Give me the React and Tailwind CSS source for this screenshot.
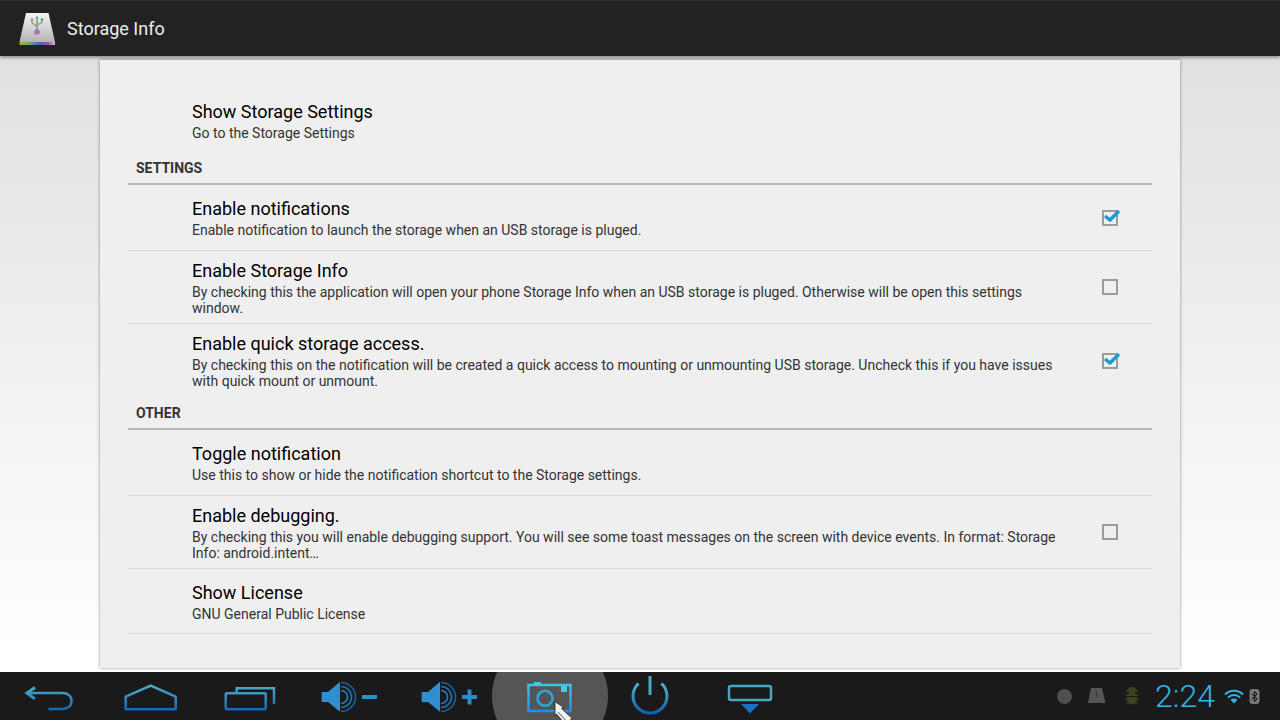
const font = { fontFamily: "Roboto, 'Liberation Sans', sans-serif" };

function Grad() {
  return (
    <svg width="0" height="0" className="absolute">
      <defs>
        <linearGradient id="navGrad" gradientUnits="userSpaceOnUse" x1="0" y1="10" x2="0" y2="40">
          <stop offset="0" stopColor="#55b8c8" />
          <stop offset="1" stopColor="#1162b8" />
        </linearGradient>
        <linearGradient id="camGrad" gradientUnits="userSpaceOnUse" x1="0" y1="10" x2="0" y2="40">
          <stop offset="0" stopColor="#3fcbe0" />
          <stop offset="1" stopColor="#1a8ff2" />
        </linearGradient>
        <linearGradient id="diskGrad" x1="0" y1="0" x2="0" y2="1">
          <stop offset="0" stopColor="#f4f4f4" />
          <stop offset="1" stopColor="#b4b4b4" />
        </linearGradient>
        <linearGradient id="rainbow" x1="0" y1="0" x2="1" y2="0">
          <stop offset="0" stopColor="#b8a050" />
          <stop offset="0.3" stopColor="#60b060" />
          <stop offset="0.55" stopColor="#5060c0" />
          <stop offset="0.8" stopColor="#a050a0" />
          <stop offset="1" stopColor="#c0c0c0" />
        </linearGradient>
      </defs>
    </svg>
  );
}

function NavIcon({ children }) {
  return (
    <svg width="100" height="48" viewBox="0 0 100 48" fill="none" stroke="url(#navGrad)" strokeWidth="2.5" className="shrink-0">
      {children}
    </svg>
  );
}

function Speaker() {
  return (
    <>
      <path d="M21.7 20H28L40 9.7V39.7L28 30H21.7Z" fill="#2f8fd0" stroke="none" />
      <path d="M41 18.5A6.5 6.5 0 0 1 41 31.5" strokeWidth="1.6" stroke="#1f7fc0" />
      <path d="M41 14.5A10.5 10.5 0 0 1 41 35.5" strokeWidth="1.6" stroke="#1f70b0" />
      <path d="M41 10.5A14.5 14.5 0 0 1 41 39.5" strokeWidth="1.6" stroke="#1a609c" />
    </>
  );
}

function BottomBar() {
  return (
    <div className="flex h-12 shrink-0 items-center overflow-hidden bg-[#1a1a1a]">
      <NavIcon>
        <path d="M26.5 21H62C68 21 71.5 24 71.5 29C71.5 34 68 37 62 37H48.5" />
        <path d="M35 15.5L27 21L35 27" strokeWidth="3" />
      </NavIcon>
      <NavIcon>
        <path d="M25.7 37.3V24.7L50.7 13.7L75.7 24.7V37.3Z" strokeLinejoin="round" />
      </NavIcon>
      <NavIcon>
        <rect x="25.7" y="21.3" width="40" height="16" rx="1" />
        <path d="M36.7 20V16.3H74V32" />
      </NavIcon>
      <NavIcon>
        <Speaker />
        <rect x="62" y="23" width="15" height="4" fill="#2a90d0" stroke="none" />
      </NavIcon>
      <NavIcon>
        <Speaker />
        <path d="M62 25H77M69.5 17.5V32.5" stroke="#2a8cc8" strokeWidth="4" />
      </NavIcon>
      <div className="relative h-12 w-[100px] shrink-0">
        <div className="absolute top-[-34px] left-[-8px] h-[116px] w-[116px] rounded-full bg-[radial-gradient(circle,#555555_86%,#1a1a1a_100%)]" />
        <svg width="100" height="48" viewBox="0 0 100 48" fill="none" stroke="url(#camGrad)" strokeWidth="2.5" className="relative">
          <rect x="28.5" y="13" width="42" height="26" />
          <rect x="34" y="10" width="7" height="3" fill="#3fcbe0" stroke="none" />
          <rect x="61" y="14" width="6" height="6" fill="#3fcbe0" stroke="none" />
          <circle cx="45" cy="26.3" r="7.5" stroke="#2ba6e0" />
          <path d="M55 29.5L63 35L61.5 36.5L72 46L66 53L56.5 42L55 44Z" fill="#f2f2f2" stroke="#222" strokeWidth="0.8" />
          <path d="M62 37L73 47M58 40L68 51" stroke="#555" strokeWidth="1" />
        </svg>
      </div>
      <NavIcon>
        <path d="M38.5 11.5A17 17 0 1 0 61.5 11.5" strokeWidth="3" />
        <path d="M50 4V23" strokeWidth="3" stroke="#49a8c4" />
      </NavIcon>
      <NavIcon>
        <rect x="29" y="14" width="42" height="14" rx="2" strokeWidth="2.5" stroke="#45a8c0" />
        <path d="M41 32H59L50 41.5Z" fill="#1770c4" stroke="none" />
      </NavIcon>
      <div className="ml-auto flex items-center">
        <div className="h-[15px] w-[15px] rounded-full bg-[#4f4f4f]" />
        <svg width="20" height="16" viewBox="0 0 20 16" className="ml-[15px]">
          <path d="M4 0H15L18.5 15H1Z" fill="#555" />
          <path d="M9.5 3V9" stroke="#3a3a3a" strokeWidth="1.5" />
        </svg>
        <svg width="16" height="18" viewBox="0 0 16 18" className="ml-[17px]" fill="#3a4220" stroke="#3a4220">
          <ellipse cx="8" cy="11" rx="5" ry="6" />
          <path d="M3 4.5A5 4 0 0 1 13 4.5Z" />
          <path d="M1 8H15M0.5 12H15.5M2 16L14 16M4 0.5L5.5 2.5M12 0.5L10.5 2.5" strokeWidth="1" />
          <path d="M3 9.5H13" stroke="#1a1a1a" strokeWidth="1" />
        </svg>
        <span className="ml-[15px] text-[32px] leading-none font-light text-[#33b5e5]">2:24</span>
        <svg width="20" height="15" viewBox="0 0 20 15" fill="none" stroke="#33b5e5" strokeWidth="2" className="ml-[9px]">
          <path d="M1 5.5C6 0.5 14 0.5 19 5.5" />
          <path d="M4 8.5C7.5 5 12.5 5 16 8.5" />
          <path d="M10 14.5L6.5 10.5C8.5 9 11.5 9 13.5 10.5Z" fill="#33b5e5" stroke="none" />
        </svg>
        <svg width="11" height="15" viewBox="0 0 11 15" className="mr-[20px] ml-[5px]">
          <rect x="0.5" y="0" width="10" height="15" rx="3" fill="#777" />
          <path d="M2.8 4.5L8 10L5.5 12.5V2.5L8 5L2.8 10.5" fill="none" stroke="#111" strokeWidth="1" />
        </svg>
      </div>
    </div>
  );
}

function Logo() {
  return (
    <svg width="38" height="34" viewBox="0 0 38 34" className="shrink-0">
      <path d="M7 1H29.5L36 30H0.5Z" fill="url(#diskGrad)" />
      <rect x="0.5" y="30" width="35.5" height="3" fill="url(#rainbow)" />
      <path d="M18 6V18" stroke="#5a9a9a" strokeWidth="1.3" />
      <path d="M13 8V11L18 14.5M23 8V10.5L18 13" stroke="#8a9a60" strokeWidth="1.2" fill="none" />
      <rect x="11.8" y="6.5" width="2.4" height="2.4" fill="#b08a50" />
      <circle cx="23" cy="7.5" r="1.3" fill="#4a9a80" />
      <path d="M18 3.5L16.5 6.5H19.5Z" fill="#5a9a9a" />
      <circle cx="18" cy="20" r="2.8" fill="#b070b8" />
    </svg>
  );
}

function Checkbox({ checked }) {
  return (
    <div className="relative h-4 w-4 border-2 border-[#9c9c9c]">
      {checked && (
        <svg width="22" height="18" viewBox="0 0 22 18" fill="none" className="absolute top-[-3px] left-[-1px]">
          <path d="M2 7L7 11L16 2" stroke="#1a9bd0" strokeWidth="3.4" />
        </svg>
      )}
    </div>
  );
}

function Row({ title, desc, check, last, height }) {
  return (
    <div className={`flex ${height} items-center border-b border-[#d9d9d9]`}>
      <div className="min-w-0 flex-1 pl-16">
        <div className="text-lg leading-6 text-black">{title}</div>
        <div className="mt-px text-sm leading-4 text-[#333]">{desc}</div>
      </div>
      <div className="flex w-[84px] shrink-0 justify-center">
        {check !== undefined && <Checkbox checked={check} />}
      </div>
    </div>
  );
}

function Section({ label, className }) {
  return (
    <div className={`flex items-center border-b-2 border-[#b8b8b8] pl-2 text-sm font-bold text-[#333] uppercase ${className}`}>
      {label}
    </div>
  );
}

export default function App() {
  return (
    <div style={font} className="flex h-screen w-[1280px] flex-col overflow-hidden bg-[linear-gradient(#dedede,#ffffff_90%)]">
      <Grad />
      <header className="flex h-14 shrink-0 items-center border-t border-[#303030] bg-[#222222] pl-[19px] shadow-[0_2px_3px_rgba(0,0,0,0.35)]">
        <Logo />
        <span className="ml-2.5 text-lg text-[#ededed]">Storage Info</span>
      </header>
      <main className="mx-[100px] mt-1 mb-1 flex-1 bg-[#efefef] px-7 pt-9 shadow-[0_0_3px_rgba(0,0,0,0.45)]">
        <div className="flex h-[57px] flex-col pt-[4px] pl-16">
          <div className="text-lg leading-6 text-black">Show Storage Settings</div>
          <div className="mt-px text-sm leading-4 text-[#333]">Go to the Storage Settings</div>
        </div>
        <Section label="Settings" className="h-[32px]" />
        <Row height="h-[66px]" title="Enable notifications" desc="Enable notification to launch the storage when an USB storage is pluged." check={true} />
        <Row height="h-[73px]" title="Enable Storage Info" desc="By checking this the application will open your phone Storage Info when an USB storage is pluged. Otherwise will be open this settings window." check={false} />
        <Row height="h-[73px] border-b-0" title="Enable quick storage access." desc="By checking this on the notification will be created a quick access to mounting or unmounting USB storage. Uncheck this if you have issues with quick mount or unmount." check={true} />
        <Section label="Other" className="h-[33px]" />
        <Row height="h-[66px]" title="Toggle notification" desc="Use this to show or hide the notification shortcut to the Storage settings." />
        <Row height="h-[73px]" title="Enable debugging." desc="By checking this you will enable debugging support. You will see some toast messages on the screen with device events. In format: Storage Info: android.intent…" check={false} />
        <Row height="h-[65px]" title="Show License" desc="GNU General Public License" />
      </main>
      <BottomBar />
    </div>
  );
}
